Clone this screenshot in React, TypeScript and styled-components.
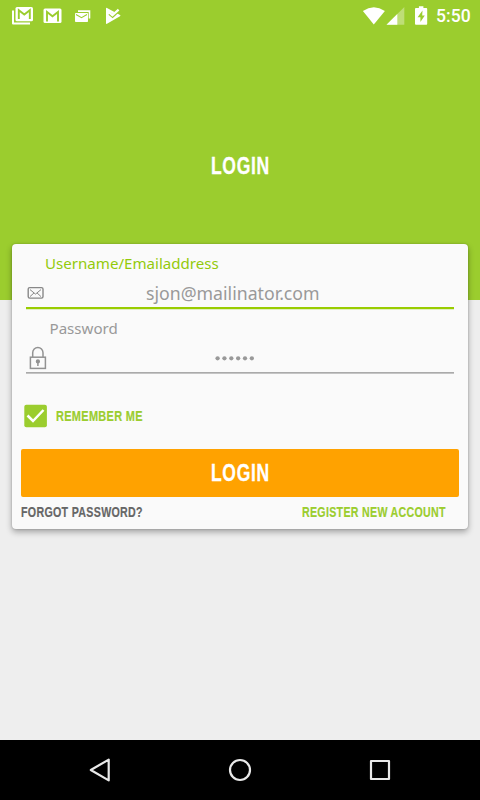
import React from "react";
import styled, { createGlobalStyle } from "styled-components";

const GlobalStyle = createGlobalStyle`
  * { box-sizing: border-box; }
  body { margin: 0; background: #eeeeee; }
`;

const Screen = styled.div`
  width: 480px;
  height: 800px;
  display: flex;
  flex-direction: column;
  overflow: hidden;
  background: #eeeeee;
  font-family: "Noto Sans", "Open Sans", sans-serif;
`;

const Header = styled.header`
  height: 300px;
  flex: none;
  background: #9bcd2e;
`;

const StatusBar = styled.div`
  height: 32px;
  display: flex;
  justify-content: space-between;
`;

const StatusIcons = styled.svg`
  display: block;
  width: 130px;
  height: 32px;
`;

const StatusRight = styled.div`
  display: flex;
`;

const SignalIcons = styled.svg`
  display: block;
  width: 74px;
  height: 32px;
`;

const Clock = styled.span`
  width: 44px;
  font: 500 17.6px/33px Roboto, sans-serif;
  color: #fff;
`;

const Condensed = styled.span<{
  $size: number;
  $scale: number;
  $width: number;
  $spacing: number;
}>`
  display: block;
  width: ${(p) => p.$width}px;
  font: bold ${(p) => p.$size}px/1 "Liberation Sans", sans-serif;
  letter-spacing: ${(p) => p.$spacing}px;
  white-space: nowrap;
  -webkit-text-stroke: ${(p) => p.$size / 80}px currentColor;
  transform: scaleX(${(p) => p.$scale});
  transform-origin: left center;
`;

const Title = styled.h1`
  margin: 122px 0 0 210.5px;
  color: #fff;
`;

const Main = styled.main`
  flex: 1;
  padding: 0 12px;
`;

const Card = styled.div`
  position: relative;
  height: 285px;
  margin-top: -56px;
  padding: 0 9px;
  border-radius: 4px;
  background: #fafafa;
  box-shadow: 0 3px 6px rgba(0, 0, 0, 0.32), 0 0 2px rgba(0, 0, 0, 0.22);
`;

const Field = styled.div<{ $active?: boolean }>`
  height: ${(p) => (p.$active ? "65px" : "64px")};
  margin: 0 5px;
  display: flex;
  flex-direction: column;
  border-bottom: ${(p) => (p.$active ? "2px solid #99cc00" : "1px solid #aaa")};
  box-shadow: 0 1px 0 ${(p) => (p.$active ? "#e2efc0" : "#c4c4c4")};
`;

const Label = styled.label<{ $active?: boolean }>`
  flex: none;
  height: 30px;
  padding: ${(p) => (p.$active ? "9px 0 0 19px" : "9px 0 0 23.5px")};
  font-size: 15.1px;
  line-height: 20px;
  color: ${(p) => (p.$active ? "#93ca0b" : "#999")};
`;

const InputRow = styled.div`
  flex: none;
  height: 33px;
  display: flex;
`;

const FieldIcon = styled.svg`
  flex: none;
  width: 24px;
  height: 34px;
`;

const Value = styled.span`
  margin-left: 96px;
  font-size: 17.7px;
  line-height: 38px;
  color: #999;
`;

const Dots = styled.svg`
  width: 42px;
  height: 34px;
  margin-left: 164px;
`;

const Remember = styled.div`
  display: flex;
  align-items: center;
  gap: 8px;
  height: 24px;
  margin: 31px 0 0 3px;
  color: #9bcd2e;
`;

const Checkbox = styled.svg`
  width: 24px;
  height: 24px;
`;

const LoginButton = styled.button`
  display: flex;
  align-items: center;
  width: 438px;
  height: 48px;
  margin: 21px 0 0;
  padding: 0 0 0 189.5px;
  border: 0;
  border-radius: 2px;
  background: #ffa200;
  color: #fff;
`;

const Links = styled.div`
  display: flex;
  justify-content: space-between;
  padding: 7px 13px 0 0;
`;

const Link = styled.a<{ $accent?: boolean }>`
  color: ${(p) => (p.$accent ? "#9bcd2e" : "#666")};
`;

const NavBar = styled.nav`
  flex: none;
  height: 60px;
  display: flex;
  justify-content: center;
  gap: 110px;
  align-items: center;
  background: #000;
`;

const NavIcon = styled.svg`
  width: 30px;
  height: 30px;
  fill: none;
  stroke: #e9e9e9;
  stroke-width: 2.2;
  stroke-linejoin: round;
`;

export default function App() {
  return (
    <Screen>
      <GlobalStyle />
      <Header>
        <StatusBar>
          <StatusIcons viewBox="0 0 130 32">
            <path d="M13 10.5V23.5H30" fill="none" stroke="#fff" strokeWidth="2" strokeLinejoin="round" />
            <rect x="15.5" y="7" width="17.5" height="14.2" rx="1.5" fill="#fff" />
            <path d="M18.8 19V10.2L24.3 14.5L29.8 10.2V19" fill="none" stroke="#9bcd2e" strokeWidth="1.9" />
            <rect x="43.5" y="8.5" width="18" height="14.5" rx="1.5" fill="#fff" />
            <path d="M47 21.5V12L52.5 16.2L58 12V21.5" fill="none" stroke="#9bcd2e" strokeWidth="1.9" />
            <path d="M78 12V10.3H90.3V18.5H88.7V12Z" fill="#fff" />
            <rect x="75" y="13" width="13" height="9" rx="0.8" fill="#fff" />
            <path d="M76 14.5L81.5 17.7L87 14.5" fill="none" stroke="#9bcd2e" strokeWidth="1.1" />
            <path d="M106 8.5Q106 7.5 107 8L120 15Q121 15.5 120 16.2L107 23.8Q106 24.2 106 23.2Z" fill="#fff" />
            <path d="M109.5 13.5L112.6 16.2L119.8 9.4" fill="none" stroke="#9bcd2e" strokeWidth="3.2" />
            <path d="M109.4 12.7L112.4 15.3L118.6 9.6" fill="none" stroke="#fff" strokeWidth="2.2" />
          </StatusIcons>
          <StatusRight>
            <SignalIcons viewBox="0 0 74 32">
              <path d="M11.8 24.4L.9 10.9Q11.8 3.5 22.9 10.9Z" fill="#fff" />
              <path d="M42.3 7V24.8H24.5Z" fill="#fff" opacity=".35" />
              <path d="M35.3 14V24.8H24.5Z" fill="#fff" />
              <path d="M53.9 8H56.9V6.2H61.4V8H64.4Q65.2 8 65.2 9V23.7Q65.2 24.7 64.4 24.7H53.9Q53 24.7 53 23.7V9Q53 8 53.9 8Z" fill="#fff" />
              <path d="M60.5 10.5L55.6 17.2H58.4V22L62.8 15.4H60.2Z" fill="#9bcd2e" />
            </SignalIcons>
            <Clock>5:50</Clock>
          </StatusRight>
        </StatusBar>
        <Title>
          <Condensed $size={24} $scale={0.73} $width={60} $spacing={0.9}>LOGIN</Condensed>
        </Title>
      </Header>
      <Main>
        <Card>
          <Field $active>
            <Label $active>Username/Emailaddress</Label>
            <InputRow>
              <FieldIcon viewBox="0 0 24 34" fill="none" stroke="#888">
                <rect x="2.2" y="13.6" width="14.8" height="10.5" rx="1.5" strokeWidth="1.4" />
                <path d="M4 15.6L9.5 20.1L15 15.6M4 22.6L8 18.9M15 22.6L11 18.9" strokeWidth="1" />
              </FieldIcon>
              <Value>sjon@mailinator.com</Value>
            </InputRow>
          </Field>
          <Field>
            <Label>Password</Label>
            <InputRow>
              <FieldIcon viewBox="0 0 24 34" fill="none" stroke="#929292" strokeWidth="1.5">
                <rect x="4.4" y="18.2" width="15" height="11.2" />
                <path d="M6.7 18V13.7a5.1 5.2 0 0 1 10.3 0V18" />
                <circle cx="11.9" cy="22.4" r="1.4" fill="#929292" />
                <path d="M11.9 23V27" />
              </FieldIcon>
              <Dots viewBox="0 0 42 34" fill="#999">
                {[0, 1, 2, 3, 4, 5].map((i) => (
                  <circle key={i} cx={3.6 + i * 6.85} cy="19.3" r="2.15" />
                ))}
              </Dots>
            </InputRow>
          </Field>
          <Remember>
            <Checkbox viewBox="0 0 24 24">
              <rect x=".3" y=".8" width="22.6" height="22.4" rx="2" fill="#9bcd2e" />
              <path d="M3.5 11.5L9 17L19.5 6" fill="none" stroke="#fff" strokeWidth="2.5" />
            </Checkbox>
            <Condensed $size={15.4} $scale={0.711} $width={87} $spacing={0.45}>REMEMBER ME</Condensed>
          </Remember>
          <LoginButton type="button">
            <Condensed $size={24} $scale={0.73} $width={60} $spacing={0.9}>LOGIN</Condensed>
          </LoginButton>
          <Links>
            <Link>
              <Condensed $size={15.4} $scale={0.692} $width={122} $spacing={0.45}>FORGOT PASSWORD?</Condensed>
            </Link>
            <Link $accent>
              <Condensed $size={15.4} $scale={0.69} $width={144} $spacing={0.45}>REGISTER NEW ACCOUNT</Condensed>
            </Link>
          </Links>
        </Card>
      </Main>
      <NavBar>
        <NavIcon viewBox="0 0 30 30">
          <path d="M5.8 15L23.7 4.6V25.4Z" />
        </NavIcon>
        <NavIcon viewBox="0 0 30 30">
          <circle cx="15" cy="15" r="10" />
        </NavIcon>
        <NavIcon viewBox="0 0 30 30">
          <rect x="6" y="6" width="18" height="18" />
        </NavIcon>
      </NavBar>
    </Screen>
  );
}
